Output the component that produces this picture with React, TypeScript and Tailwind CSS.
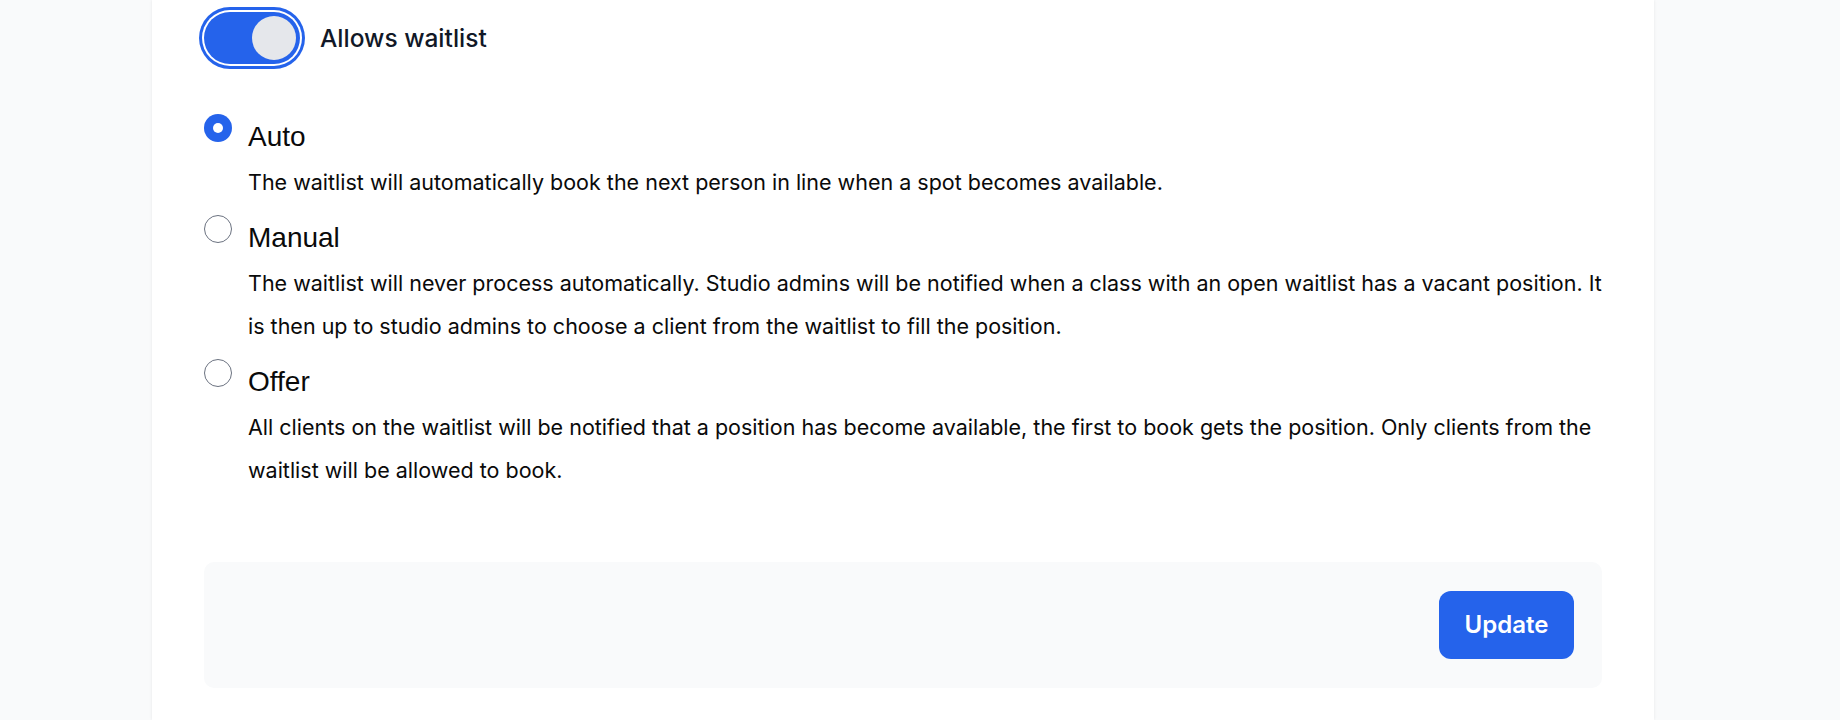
import { useState } from "react";

type Mode = "auto" | "manual" | "offer";

const options: { id: Mode; label: string; description: string }[] = [
  {
    id: "auto",
    label: "Auto",
    description:
      "The waitlist will automatically book the next person in line when a spot becomes available.",
  },
  {
    id: "manual",
    label: "Manual",
    description:
      "The waitlist will never process automatically. Studio admins will be notified when a class with an open waitlist has a vacant position. It is\u00a0then up to studio admins to choose a client from the waitlist to fill the position.",
  },
  {
    id: "offer",
    label: "Offer",
    description:
      "All clients on the waitlist will be notified that a position has become available, the first to book gets the position. Only clients from the waitlist will be allowed to book.",
  },
];

export default function App() {
  const [enabled, setEnabled] = useState(true);
  const [mode, setMode] = useState<Mode>("auto");

  return (
    <div className="min-h-screen bg-[#f9fafb] pl-[152px] pr-[186px]">
      <div className="min-h-screen bg-white px-[52px] pt-[12px] shadow-[0_0_3px_rgba(0,0,0,0.08)]">
        {/* Waitlist toggle */}
        <div className="flex items-center gap-[20px]">
          <button
            type="button"
            onClick={() => setEnabled(!enabled)}
            className={`relative flex h-[52px] w-[96px] shrink-0 items-center rounded-full p-[4px] ring-[3px] ring-offset-2 ring-[#2563eb] ring-offset-white ${
              enabled ? "bg-[#2563eb]" : "bg-gray-300"
            }`}
          >
            <span
              className={`h-[44px] w-[44px] rounded-full bg-[#e5e7eb] transition-transform ${
                enabled ? "translate-x-[44px]" : "translate-x-0"
              }`}
            />
          </button>
          <span className="font-['Inter',sans-serif] text-[24.5px] font-medium text-[#111827]">
            Allows waitlist
          </span>
        </div>

        {/* Waitlist modes */}
        <div className="mt-[52px] flex flex-col gap-[13px] text-[#0a0a0a]">
          {options.map((o) => (
            <div key={o.id}>
              <label className="flex cursor-pointer items-start gap-[16px]">
                <span
                  onClick={() => setMode(o.id)}
                  className={`-mt-[2px] flex h-[28px] w-[28px] shrink-0 items-center justify-center rounded-full ${
                    mode === o.id
                      ? "bg-[#2563eb]"
                      : "border-[1.5px] border-[#6b7280] bg-white"
                  }`}
                >
                  {mode === o.id && (
                    <span className="h-[10px] w-[10px] rounded-full bg-white" />
                  )}
                </span>
                <span className="font-['Liberation_Sans',Arial,sans-serif] text-[28px] leading-[42px]">
                  {o.label}
                </span>
              </label>
              <p className="mt-[3px] pl-[44px] font-['Inter',sans-serif] text-[21.5px] leading-[43px]">
                {o.description}
              </p>
            </div>
          ))}
        </div>

        {/* Footer */}
        <div className="mt-[70px] flex justify-end rounded-[10px] bg-[#f9fafb] px-[28px] py-[29px]">
          <button
            type="button"
            className="h-[68px] w-[135px] rounded-[12px] bg-[#2563eb] font-['Inter',sans-serif] text-[24px] font-semibold text-white"
          >
            Update
          </button>
        </div>
      </div>
    </div>
  );
}
